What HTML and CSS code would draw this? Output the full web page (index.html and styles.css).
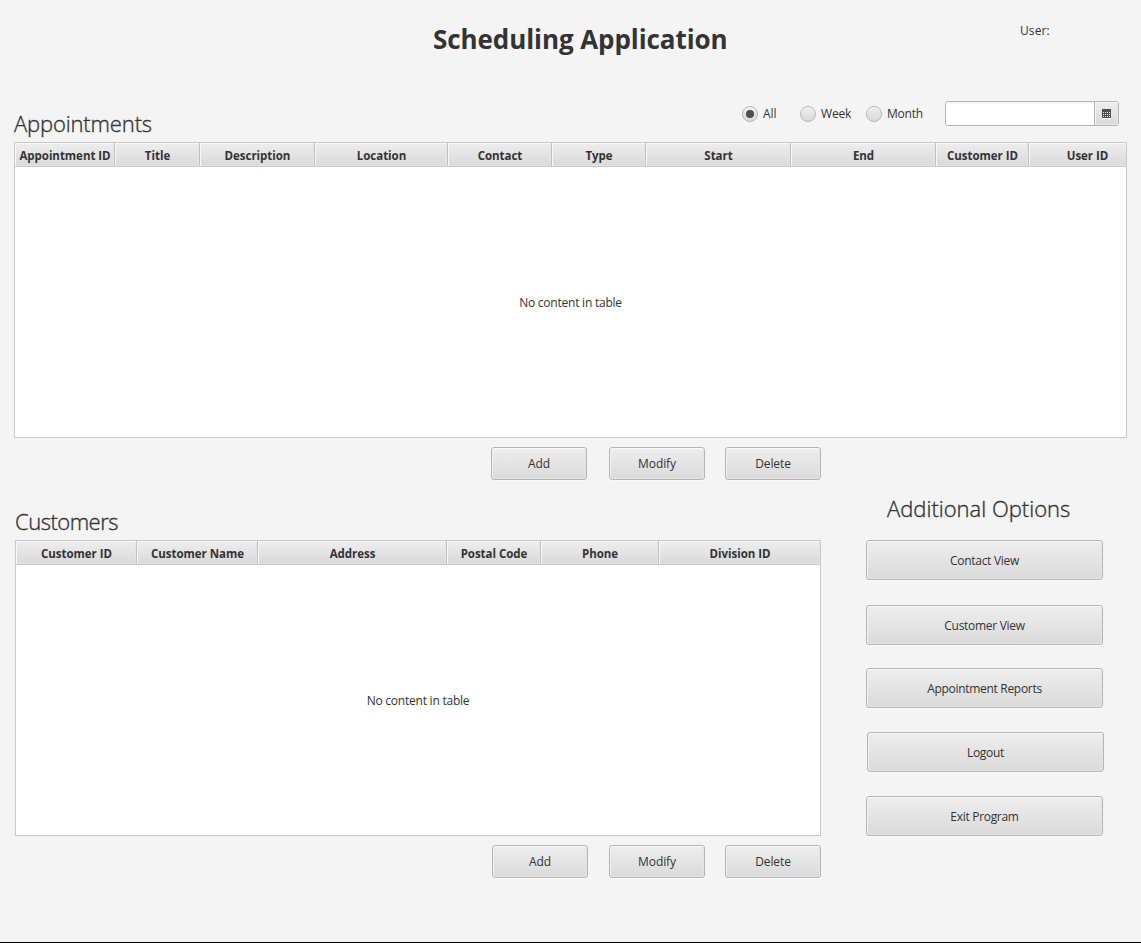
FILE: index.html
```html
<!DOCTYPE html>
<html lang="en">
<head>
<meta charset="utf-8">
<title>Scheduling Application</title>
<link rel="stylesheet" href="styles.css">
</head>
<body>
<div class="app">
  <header class="top">
    <h1 class="title">Scheduling Application</h1>
    <span class="user">User:</span>
  </header>
  <div class="toolbar">
    <h2 class="heading heading-appointments">Appointments</h2>
    <div class="filters">
      <label class="radio radio-all"><i class="dot dot-on"></i><span>All</span></label>
      <label class="radio radio-week"><i class="dot"></i><span>Week</span></label>
      <label class="radio radio-month"><i class="dot"></i><span>Month</span></label>
      <div class="datepicker">
        <div class="field"></div>
        <div class="calendar">
          <svg width="9" height="10" viewBox="0 0 9 10" shape-rendering="crispEdges">
            <path fill="#4d4d4d" d="M0 0h9v9H0z"/>
            <path fill="#e8e8e8" d="M1 3h1v1H1zM3 3h1v1H3zM5 3h1v1H5zM7 3h1v1H7zM1 5h1v1H1zM3 5h1v1H3zM5 5h1v1H5zM7 5h1v1H7zM1 7h1v1H1zM3 7h1v1H3zM5 7h1v1H5zM7 7h1v1H7z"/>
            <path fill="#fff" d="M0 9h9v1H0z"/>
          </svg>
        </div>
      </div>
    </div>
  </div>
  <section class="table appointments">
    <div class="head">
      <div class="col">Appointment ID</div>
      <div class="col">Title</div>
      <div class="col">Description</div>
      <div class="col">Location</div>
      <div class="col">Contact</div>
      <div class="col">Type</div>
      <div class="col">Start</div>
      <div class="col">End</div>
      <div class="col">Customer ID</div>
      <div class="col">User ID</div>
    </div>
    <div class="empty"><span>No content in table</span></div>
  </section>
  <div class="actions actions-appointments">
    <button class="btn">Add</button>
    <button class="btn">Modify</button>
    <button class="btn">Delete</button>
  </div>
  <main class="lower">
    <section class="customers-pane">
      <h2 class="heading heading-customers">Customers</h2>
      <div class="table customers">
        <div class="head">
          <div class="col">Customer ID</div>
          <div class="col">Customer Name</div>
          <div class="col">Address</div>
          <div class="col">Postal Code</div>
          <div class="col">Phone</div>
          <div class="col">Division ID</div>
        </div>
        <div class="empty"><span>No content in table</span></div>
      </div>
      <div class="actions actions-customers">
        <button class="btn">Add</button>
        <button class="btn">Modify</button>
        <button class="btn">Delete</button>
      </div>
    </section>
    <aside class="options">
      <h2 class="heading heading-options">Additional Options</h2>
      <button class="btn wide">Contact View</button>
      <button class="btn wide">Customer View</button>
      <button class="btn wide">Appointment Reports</button>
      <button class="btn wide logout">Logout</button>
      <button class="btn wide">Exit Program</button>
    </aside>
  </main>
</div>
</body>
</html>
```
FILE: styles.css
```css
* { box-sizing: border-box; }
body {
  margin: 0;
  background: #f4f4f4;
  color: #333;
  font: 12px/16px "Open Sans", "Noto Sans", sans-serif;
}
.app {
  width: 1141px;
  height: 943px;
  overflow: hidden;
  display: flex;
  flex-direction: column;
  border-bottom: 1px solid #000;
}
.top {
  height: 80px;
  flex: none;
  display: grid;
  grid-template-columns: 433px 587px 1fr;
  align-items: start;
}
.title {
  grid-column: 2;
  margin: 20px 0 0;
  font-size: 26px;
  line-height: 38px;
  font-weight: 700;
  letter-spacing: -0.08px;
  white-space: nowrap;
}
.user { margin-top: 23px; letter-spacing: 0.1px; }
.toolbar {
  height: 62px;
  flex: none;
  display: flex;
  justify-content: space-between;
  padding: 0 22px 0 14px;
}
.heading {
  margin: 0;
  font-size: 22px;
  line-height: 30px;
  font-weight: 300;
  -webkit-text-stroke: 0.35px #333;
  white-space: nowrap;
}
.heading-appointments { padding-top: 28px; letter-spacing: -0.15px; }
.filters {
  display: flex;
  align-items: center;
  height: 25px;
  margin-top: 21px;
}
.radio { display: flex; align-items: center; gap: 5px; letter-spacing: -0.2px; }
.radio-all { width: 58px; letter-spacing: 0; }
.radio-week { width: 66px; }
.radio-month { width: 79px; }
.dot {
  width: 16px;
  height: 16px;
  border-radius: 50%;
  border: 1px solid #b5b5b5;
  background: linear-gradient(#ededed, #dadada);
  box-shadow: inset 0 1px 0 #f8f8f8;
  display: flex;
  align-items: center;
  justify-content: center;
}
.dot-on::after {
  content: "";
  width: 8px;
  height: 8px;
  border-radius: 50%;
  background: #4d4d4d;
}
.datepicker {
  width: 174px;
  height: 25px;
  display: flex;
  border: 1px solid #b5b5b5;
  border-radius: 3px;
  background: #fff;
  overflow: hidden;
}
.field {
  width: 148px;
  background: linear-gradient(#f2f2f2, #fff 3px);
}
.calendar {
  flex: 1;
  border-left: 1px solid #b5b5b5;
  background: linear-gradient(#ededed, #dadada);
  box-shadow: inset 1px 1px 0 #f6f6f6, inset -1px -1px 0 #e6e6e6;
  display: flex;
  align-items: center;
  justify-content: center;
}
.table {
  height: 296px;
  flex: none;
  border: 1px solid #c8c8c8;
  background: #fff;
  overflow: hidden;
}
.head {
  display: grid;
  height: 24px;
  border-bottom: 1px solid #c8c8c8;
}
.col {
  display: flex;
  align-items: center;
  justify-content: center;
  padding: 2px 0 0 1px;
  font-weight: 700;
  font-size: 11.5px;
  letter-spacing: -0.03px;
  white-space: nowrap;
  border-right: 1px solid #c0c0c0;
  background: linear-gradient(#eee, #d9d9d9);
  box-shadow: inset 1px 1px 0 #f9f9f9, inset -1px -1px 0 #e4e4e4;
}
.empty {
  height: 270px;
  padding-top: 2px;
  display: flex;
  align-items: center;
  justify-content: center;
  letter-spacing: -0.23px;
}
.appointments { width: 1113px; margin-left: 14px; }
.appointments .head { grid-template-columns: 100px 85px 115px 133px 104px 94px 145px 145px 93px 117px; }
.customers { width: 806px; }
.customers .head { grid-template-columns: 121px 121px 189px 94px 118px 162px; }
.btn {
  width: 96px;
  height: 33px;
  padding: 0;
  border: 1px solid #b5b5b5;
  border-radius: 3px;
  background: linear-gradient(#eee, #dadada);
  box-shadow: inset 0 1px 0 #fafafa, inset 1px 0 0 #f0f0f0, inset -1px -1px 0 #e4e4e4, 0 1px 0 #fafafa;
  color: #333;
  font: inherit;
  letter-spacing: -0.1px;
  white-space: nowrap;
}
.actions { display: grid; flex: none; }
.actions-appointments {
  grid-template-columns: 118px 116px 96px;
  padding: 9px 0 0 491px;
  height: 58px;
}
.actions-customers {
  grid-template-columns: 117px 116px 96px;
  padding: 9px 0 0 477px;
}
.lower {
  display: grid;
  grid-template-columns: 806px 237px;
  column-gap: 45px;
  padding-left: 15px;
}
.heading-customers { padding-top: 10px; height: 44px; letter-spacing: -0.5px; }
.options { display: flex; flex-direction: column; }
.heading-options { padding: 0 0 0 21px; height: 44px; margin-top: -3px; margin-bottom: 3px; }
.wide {
  width: 237px;
  height: 40px;
  padding: 2px 0 0;
  margin-bottom: 24px;
  flex: none;
  letter-spacing: -0.3px;
}
.wide:nth-of-type(1) { margin-bottom: 25px; }
.wide:nth-of-type(2) { margin-bottom: 23px; }
.logout { margin-left: 1px; }
```
